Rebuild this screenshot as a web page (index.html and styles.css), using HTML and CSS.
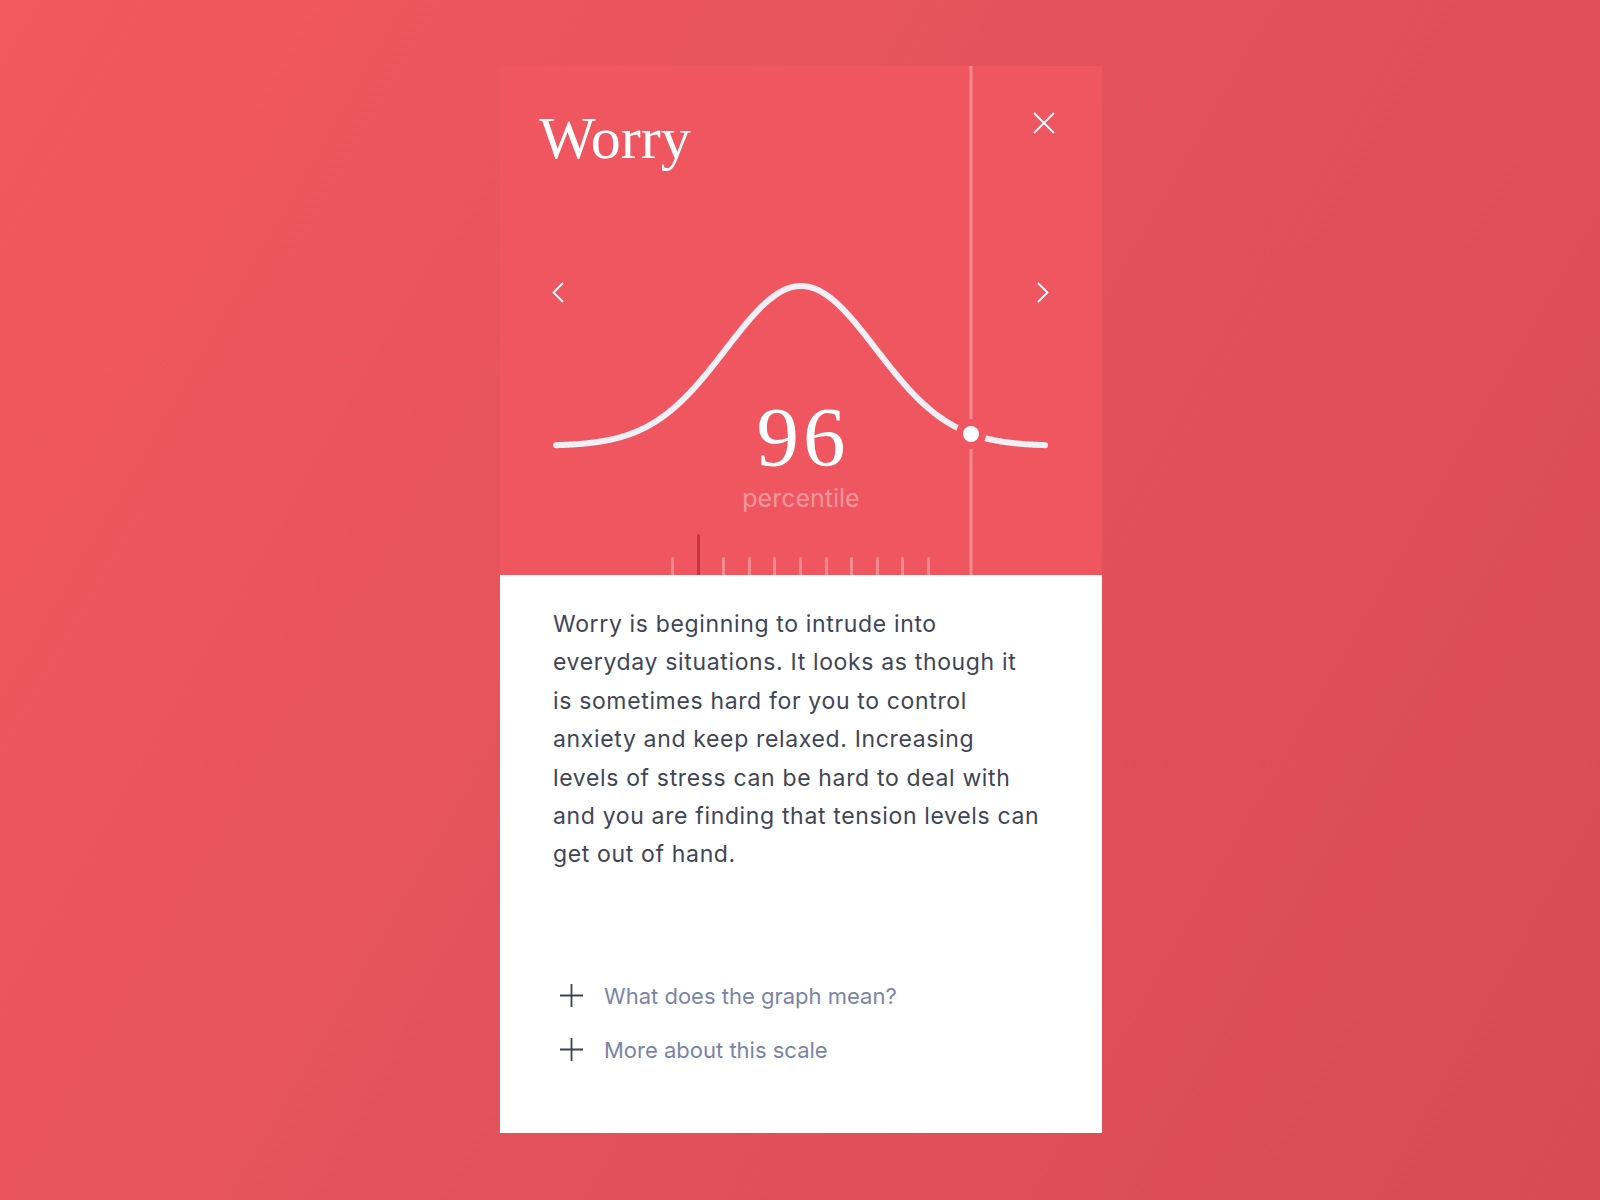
FILE: index.html
```html
<!DOCTYPE html>
<html lang="en">
<head>
  <meta charset="UTF-8">
  <title>Worry – Results</title>
  <link rel="stylesheet" href="styles.css">
</head>
<body>

  <div class="card">

    <div class="head">
      <svg class="chart" viewBox="0 0 602 509" width="602" height="509">
        <line class="marker" x1="471" y1="0" x2="471" y2="509"/>
        <path id="bell" class="bell" d=""/>
        <circle class="dot-gap" cx="471" cy="368" r="15"/>
        <circle class="dot" cx="471" cy="368" r="8"/>
      </svg>

      <div class="head-body">
        <div class="title-row">
          <h1 class="title">Worry</h1>
          <button class="icon-btn close" aria-label="Close">
            <svg viewBox="0 0 22 22" width="22" height="22">
              <path d="M1 1 L21 21 M21 1 L1 21"/>
            </svg>
          </button>
        </div>

        <div class="nav-row">
          <button class="icon-btn" aria-label="Previous">
            <svg viewBox="0 0 12 21" width="12" height="21">
              <path d="M11 1 L1.5 10.5 L11 20"/>
            </svg>
          </button>
          <button class="icon-btn" aria-label="Next">
            <svg viewBox="0 0 12 21" width="12" height="21">
              <path d="M1 1 L10.5 10.5 L1 20"/>
            </svg>
          </button>
        </div>

        <div class="score">96</div>
        <div class="score-label">percentile</div>

        <div class="ticks">
          <span class="tick"></span>
          <span class="tick current"></span>
          <span class="tick"></span>
          <span class="tick"></span>
          <span class="tick"></span>
          <span class="tick"></span>
          <span class="tick"></span>
          <span class="tick"></span>
          <span class="tick"></span>
          <span class="tick"></span>
          <span class="tick"></span>
        </div>
      </div>
    </div>

    <div class="body">
      <p class="summary">
        Worry is beginning to intrude into<br>
        everyday situations. It looks as though it<br>
        is sometimes hard for you to control<br>
        anxiety and keep relaxed. Increasing<br>
        levels of stress can be hard to deal with<br>
        and you are finding that tension levels can<br>
        get out of hand.
      </p>

      <ul class="more">
        <li>
          <svg class="plus" viewBox="0 0 23 23" width="23" height="23">
            <path d="M11.5 0 V23 M0 11.5 H23"/>
          </svg>
          <a href="#">What does the graph mean?</a>
        </li>
        <li>
          <svg class="plus" viewBox="0 0 23 23" width="23" height="23">
            <path d="M11.5 0 V23 M0 11.5 H23"/>
          </svg>
          <a href="#">More about this scale</a>
        </li>
      </ul>
    </div>

  </div>

  <script>
    // bell curve: normal distribution over the chart width
    const base = 380, peak = 160, mu = 301, sigma = 75;
    let d = '';
    for (let x = 56; x <= 545; x += 1) {
      const y = base - peak * Math.exp(-((x - mu) ** 2) / (2 * sigma * sigma));
      d += (x === 56 ? 'M' : 'L') + x + ' ' + y.toFixed(2) + ' ';
    }
    document.getElementById('bell').setAttribute('d', d);
  </script>

</body>
</html>
```

FILE: styles.css
```css
body {
  margin: 0;
  padding-left: 2px;
  min-height: 1200px;
  background: linear-gradient(120deg, #f3575f 0%, #e4535b 45%, #d84b53 100%);
  font-family: Inter, "Noto Sans", sans-serif;
}
/* === Card === */
.card {
  width: 602px;
  margin: 0 auto;
  padding-top: 66px;
}
/* === Red header with the chart === */
.head {
  display: grid;
  height: 509px;
  background: #f05660;
  color: #fff;
}
.head > * {
  grid-area: 1 / 1;
}
.chart {
  display: block;
}
.chart .marker {
  stroke: rgba(255, 255, 255, 0.3);
  stroke-width: 3;
}
.chart .bell {
  fill: none;
  stroke: #eef0f5;
  stroke-width: 6;
  stroke-linecap: round;
  stroke-linejoin: round;
}
.chart .dot-gap {
  fill: #f05660;
}
.chart .dot {
  fill: #fff;
}
.head-body {
  display: flex;
  flex-direction: column;
}
.title-row {
  display: flex;
  justify-content: space-between;
  align-items: flex-start;
  padding: 42px 47px 0 39px;
}
.title {
  margin: 0;
  font-family: "Liberation Serif", serif;
  font-weight: normal;
  font-size: 60px;
  line-height: 60px;
}
.icon-btn {
  padding: 0;
  border: 0;
  background: none;
  line-height: 0;
  cursor: pointer;
}
.icon-btn svg {
  fill: none;
  stroke: #fff;
  stroke-width: 1.8;
}
.close {
  margin-top: 4px;
}
.nav-row {
  display: flex;
  justify-content: space-between;
  margin-top: 114px;
  padding: 0 53px 0 52px;
}
.score {
  margin-top: 92px;
  padding-left: 4px;
  text-align: center;
  font-family: "Liberation Serif", serif;
  font-size: 85px;
  line-height: 85px;
  letter-spacing: 4px;
}
.score-label {
  margin-top: 6px;
  text-align: center;
  font-size: 25px;
  line-height: 25px;
  color: rgba(255, 255, 255, 0.4);
}
.ticks {
  display: flex;
  justify-content: center;
  align-items: flex-end;
  gap: 22.6px;
  margin-top: auto;
  padding-right: 1px;
}
.tick {
  width: 3px;
  height: 18px;
  border-radius: 2px 2px 0 0;
  background: rgba(255, 255, 255, 0.3);
}
.tick.current {
  height: 41px;
  background: #c2363f;
}
/* === White body === */
.body {
  height: 558px;
  box-sizing: border-box;
  padding: 30px 40px 0 53px;
  background: #fff;
}
.summary {
  margin: 0;
  font-size: 23px;
  line-height: 38.4px;
  letter-spacing: 0.65px;
  color: #3f4557;
}
.more {
  margin: 106px 0 0;
  padding: 0 0 0 7px;
  list-style: none;
  display: grid;
  gap: 22px;
}
.more li {
  display: flex;
  align-items: center;
  gap: 21px;
  height: 32px;
}
.plus {
  fill: none;
  stroke: #3d4252;
  stroke-width: 1.8;
}
.more a {
  font-size: 22px;
  color: #7a84a6;
  text-decoration: none;
}
.more a:hover {
  text-decoration: underline;
}
```
